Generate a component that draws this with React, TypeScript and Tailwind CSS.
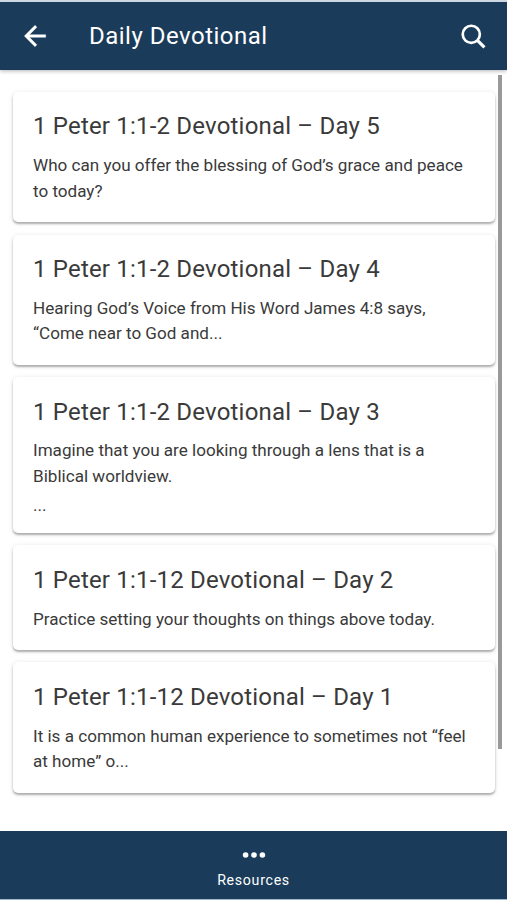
type Devotional = {
  title: string;
  lines: string[];
  size: string;
  more?: boolean;
};

const DEVOTIONALS: Devotional[] = [
  {
    title: "1 Peter 1:1-2 Devotional – Day 5",
    lines: ["Who can you offer the blessing of God’s grace and peace", "to today?"],
    size: "h-[130.2px] mb-[12.4px]",
  },
  {
    title: "1 Peter 1:1-2 Devotional – Day 4",
    lines: ["Hearing God’s Voice from His Word James 4:8 says,", "“Come near to God and..."],
    size: "h-[130.2px] mb-[12.4px]",
  },
  {
    title: "1 Peter 1:1-2 Devotional – Day 3",
    lines: ["Imagine that you are looking through a lens that is a", "Biblical worldview."],
    size: "h-[156px] mb-[12.1px]",
    more: true,
  },
  {
    title: "1 Peter 1:1-12 Devotional – Day 2",
    lines: ["Practice setting your thoughts on things above today."],
    size: "h-[105px] mb-3",
  },
  {
    title: "1 Peter 1:1-12 Devotional – Day 1",
    lines: ["It is a common human experience to sometimes not “feel", "at home” o..."],
    size: "h-[131px]",
  },
];

function BackIcon() {
  return (
    <svg width="32" height="32" viewBox="0 0 24 24" fill="#fff" stroke="#fff" strokeWidth="0.3">
      <path d="M20 11H7.83l5.59-5.59L12 4l-8 8 8 8 1.41-1.41L7.83 13H20v-2z" />
    </svg>
  );
}

function SearchIcon() {
  return (
    <svg width="25" height="25" viewBox="0 0 26 26" fill="none" stroke="#fff">
      <circle cx="10.7" cy="10.7" r="8.9" strokeWidth="2.8" />
      <path d="M16.8 16.8L24.4 24.4" strokeWidth="3.3" />
    </svg>
  );
}

function DotsIcon() {
  return (
    <svg width="24" height="8" viewBox="0 0 24 8" fill="#fff">
      <circle cx="3.6" cy="4" r="2.8" />
      <circle cx="12" cy="4" r="2.8" />
      <circle cx="20.4" cy="4" r="2.8" />
    </svg>
  );
}

function DevotionalCard({ item }: { item: Devotional }) {
  return (
    <article
      className={`${item.size} shrink-0 rounded-[5px] bg-white px-5 pt-[18.35px] text-[#3a3a3a] shadow-[0_2px_2px_rgba(0,0,0,0.26),0_1px_5px_rgba(0,0,0,0.13)]`}
    >
      <h2 className="text-2xl leading-8 tracking-[0.19px] whitespace-nowrap">{item.title}</h2>
      <div className="mt-[10.95px] text-[17.08px] leading-[25.6px] whitespace-nowrap">
        {item.lines.map((line) => (
          <p key={line}>{line}</p>
        ))}
        {item.more && <p className="mt-[3px]">...</p>}
      </div>
    </article>
  );
}

export default function App() {
  return (
    <div className="flex h-[900px] w-[507px] flex-col overflow-hidden border-t-2 border-b border-t-[#cbd8e2] border-b-[#9fbad0] bg-white font-[Roboto,sans-serif]">
      <header className="z-10 flex h-[68px] shrink-0 items-center bg-[#1a3c5a] pr-[21px] pl-[19px] text-white shadow-[0_1px_4px_rgba(0,0,0,0.3)]">
        <button type="button" aria-label="Back">
          <BackIcon />
        </button>
        <h1 className="ml-[38px] text-2xl leading-8 tracking-[0.49px] whitespace-nowrap">Daily Devotional</h1>
        <button type="button" aria-label="Search" className="ml-auto">
          <SearchIcon />
        </button>
      </header>

      <main className="relative flex min-h-0 flex-1 flex-col pt-[22px] pr-3 pl-[13px]">
        {DEVOTIONALS.map((item) => (
          <DevotionalCard key={item.title} item={item} />
        ))}
        {/* scroll thumb */}
        <div className="absolute top-[5px] right-[5px] h-[674px] w-1 bg-[#999]" />
      </main>

      <footer className="flex h-[68px] shrink-0 flex-col items-center bg-[#1a3c5a] pt-5 text-white">
        <DotsIcon />
        <span className="mt-[11px] text-[14.2px] leading-5 tracking-[0.7px]">Resources</span>
      </footer>
    </div>
  );
}
